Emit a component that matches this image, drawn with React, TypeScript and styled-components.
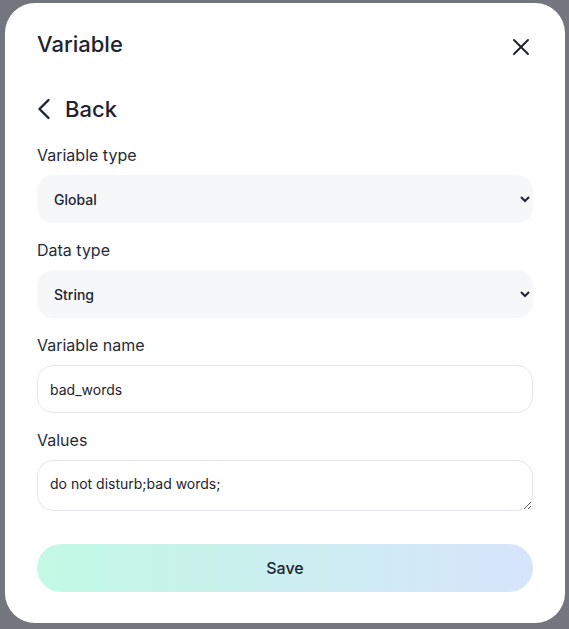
import React, { useState } from "react";
import styled, { createGlobalStyle } from "styled-components";

const GlobalStyle = createGlobalStyle`
  * { box-sizing: border-box; }
  body {
    margin: 0;
    font-family: Inter, "Noto Sans", sans-serif;
    color: #1e2331;
  }
`;

const Backdrop = styled.div`
  width: 569px;
  height: 629px;
  background: #73767f;
  padding: 3px 4px 6px 5px;
`;

const Modal = styled.div`
  background: #fff;
  border-radius: 30px;
  height: 100%;
  padding: 27px 32px 32px 32px;
  display: flex;
  flex-direction: column;
`;

const Header = styled.div`
  display: flex;
  align-items: center;
  justify-content: space-between;
  height: 28px;
`;

const Title = styled.h2`
  margin: 0;
  font-size: 22px;
  font-weight: 500;
  line-height: 28px;
`;

const IconButton = styled.button`
  border: none;
  background: none;
  padding: 0;
  margin-right: 0;
  margin-top: 6px;
  width: 24px;
  height: 24px;
  display: flex;
  align-items: center;
  justify-content: center;
  color: #1e2331;
  cursor: pointer;
`;

const BackLink = styled.button`
  border: none;
  background: none;
  padding: 0;
  margin-top: 37px;
  display: flex;
  align-items: center;
  gap: 14px;
  font-family: inherit;
  font-size: 22px;
  font-weight: 500;
  line-height: 28px;
  color: #1e2331;
  cursor: pointer;
`;

const Form = styled.form`
  margin-top: 22px;
  display: flex;
  flex-direction: column;
  gap: 17px;
`;

const Field = styled.label`
  display: flex;
  flex-direction: column;
  gap: 10px;
`;

const LabelText = styled.span`
  font-size: 16px;
  line-height: 20px;
  color: #262b38;
`;

const Select = styled.select`
  height: 48px;
  width: 100%;
  border: none;
  border-radius: 16px;
  background-color: #f6f7f9;
  padding: 0 8px 0 13px;
  font-family: inherit;
  font-size: 14px;
  font-weight: 500;
  color: #1e2331;
  outline: none;
`;

const Input = styled.input`
  height: 48px;
  width: 100%;
  border: 1px solid #e4e5ef;
  border-radius: 16px;
  background: #fff;
  padding: 0 12px;
  font-family: inherit;
  font-size: 14px;
  color: #1e2331;
  outline: none;
`;

const TextArea = styled.textarea`
  height: 51px;
  width: 100%;
  border: 1px solid #e4e5ef;
  border-radius: 16px;
  background: #fff;
  padding: 14px 12px;
  font-family: inherit;
  font-size: 14px;
  line-height: 17px;
  color: #1e2331;
  outline: none;
  resize: vertical;
`;

const SaveButton = styled.button`
  margin-top: 16px;
  height: 48px;
  width: 100%;
  border: none;
  border-radius: 24px;
  background: linear-gradient(90deg, #c2f9e4 0%, #d6e4fc 100%);
  font-family: inherit;
  font-size: 16px;
  font-weight: 500;
  color: #1e2331;
  cursor: pointer;
`;

const CloseIcon = () => (
  <svg width="18" height="18" viewBox="0 0 18 18" fill="none">
    <path d="M2 2L16 16M16 2L2 16" stroke="currentColor" strokeWidth="2" strokeLinecap="round" />
  </svg>
);

const ChevronLeft = () => (
  <svg width="14" height="22" viewBox="0 0 14 22" fill="none">
    <path d="M11.5 2L2.5 11L11.5 20" stroke="currentColor" strokeWidth="2.4" strokeLinecap="round" strokeLinejoin="round" />
  </svg>
);

export default function App() {
  const [variableType, setVariableType] = useState("global");
  const [dataType, setDataType] = useState("string");
  const [name, setName] = useState("bad_words");
  const [values, setValues] = useState("do not disturb;bad words;");

  return (
    <>
      <GlobalStyle />
      <Backdrop>
        <Modal>
          <Header>
            <Title>Variable</Title>
            <IconButton aria-label="Close">
              <CloseIcon />
            </IconButton>
          </Header>
          <BackLink>
            <ChevronLeft />
            Back
          </BackLink>
          <Form onSubmit={(e) => e.preventDefault()}>
            <Field>
              <LabelText>Variable type</LabelText>
              <Select value={variableType} onChange={(e) => setVariableType(e.target.value)}>
                <option value="global">Global</option>
                <option value="local">Local</option>
              </Select>
            </Field>
            <Field>
              <LabelText>Data type</LabelText>
              <Select value={dataType} onChange={(e) => setDataType(e.target.value)}>
                <option value="string">String</option>
                <option value="number">Number</option>
                <option value="boolean">Boolean</option>
              </Select>
            </Field>
            <Field>
              <LabelText>Variable name</LabelText>
              <Input value={name} onChange={(e) => setName(e.target.value)} />
            </Field>
            <Field>
              <LabelText>Values</LabelText>
              <TextArea value={values} onChange={(e) => setValues(e.target.value)} />
            </Field>
            <SaveButton type="submit">Save</SaveButton>
          </Form>
        </Modal>
      </Backdrop>
    </>
  );
}
